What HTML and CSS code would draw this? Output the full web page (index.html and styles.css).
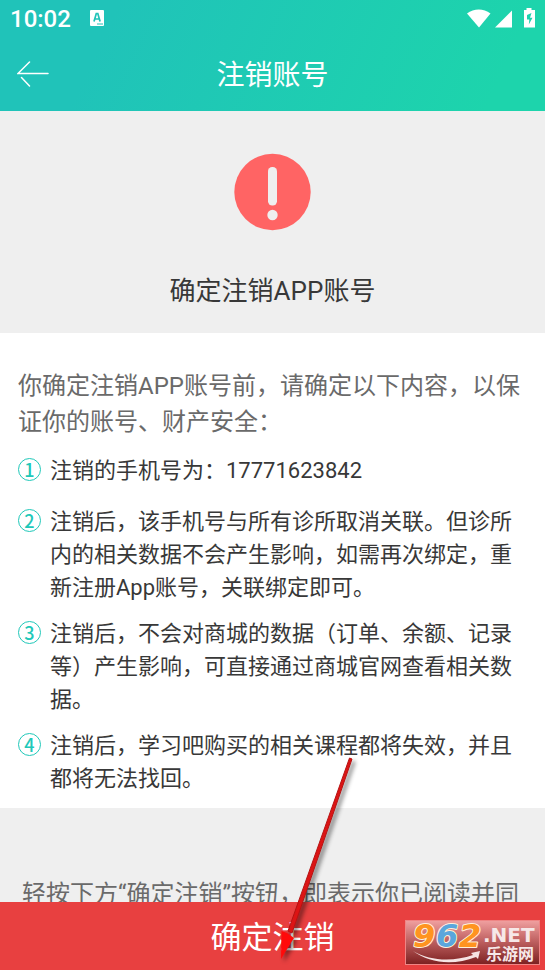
FILE: index.html
```html
<!DOCTYPE html>
<html lang="zh-CN">
<head>
<meta charset="utf-8">
<meta name="viewport" content="width=device-width, initial-scale=1">
<title>注销账号</title>
<link rel="stylesheet" href="styles.css">
</head>
<body>
<div class="app">
  <header class="header">
    <div class="status">
      <span class="clock">10:02</span>
      <svg class="status-app" width="14" height="16" viewBox="0 0 14 16" aria-hidden="true">
        <rect width="14" height="16" rx="1" fill="#fff"/>
        <path d="M4 11.500 6.300 3.500h1.500l2.300 8M4.800 9h4.600" fill="none" stroke="#20c3b8" stroke-width="1.700"/>
        <path d="M7 14h6" stroke="#20c3b8" stroke-width="1"/>
      </svg>
      <svg class="status-icons" width="68" height="20" viewBox="0 0 68 20" aria-hidden="true">
        <path d="M0 5.500C7 .300 16.500.300 23.500 5.500L12 19.500Z" fill="#fff"/>
        <path d="M28 19.500 45 2.500V19.500Z" fill="#fff"/>
        <path d="M57 2h2.500V0h5v2H68V19.500H57Z" fill="#fff"/>
        <path d="M64.500 5 60 7V11.500h2.300L61.800 16.500 65.500 9.700H63Z" fill="#1dd1ae"/>
      </svg>
    </div>
    <div class="navbar">
      <button class="back" type="button" aria-label="返回">
        <svg width="32" height="26" viewBox="0 0 32 26" fill="none" stroke="#fff" stroke-width="1.500" stroke-linecap="round" aria-hidden="true">
          <path d="M12.500 1 1 12.500H31M4.500 16.500 12.500 25"/>
        </svg>
      </button>
      <h1 class="title">注销账号</h1>
    </div>
  </header>

  <main class="main">
    <section class="hero">
      <svg class="alert" width="78" height="78" viewBox="0 0 78 78" aria-hidden="true">
        <circle cx="38.500" cy="39" r="38.200" fill="#ff6464"/>
        <rect x="34" y="14" width="9" height="38.500" rx="4.200" fill="#efefef"/>
        <circle cx="38.500" cy="62" r="5.200" fill="#efefef"/>
      </svg>
      <h2 class="hero-title">确定注销APP账号</h2>
    </section>
    <section class="content">
      <p class="intro">你确定注销APP账号前，请确定以下内容，以保证你的账号、财产安全：</p>
      <ol class="notes">
        <li class="note note-phone"><span class="num">1</span><p>注销的手机号为：17771623842</p></li>
        <li class="note"><span class="num">2</span><p>注销后，该手机号与所有诊所取消关联。但诊所内的相关数据不会产生影响，如需再次绑定，重新注册App账号，关联绑定即可。</p></li>
        <li class="note"><span class="num">3</span><p>注销后，不会对商城的数据（订单、余额、记录等）产生影响，可直接通过商城官网查看相关数据。</p></li>
        <li class="note"><span class="num">4</span><p>注销后，学习吧购买的相关课程都将失效，并且都将无法找回。</p></li>
      </ol>
    </section>
    <p class="agree">轻按下方“确定注销”按钮，即表示你已阅读并同</p>
  </main>

  <button class="confirm" type="button">确定注销</button>

  <svg class="pointer" width="90" height="213" viewBox="0 0 90 213" aria-hidden="true">
    <path d="M74.500 1 77 2 17 176 13 174Z" fill="#dc1414" stroke="#b51212" stroke-width="1"/>
    <path d="M6.500 174 12 176 19 181 6 202Z" fill="#ff0a0a"/>
  </svg>

  <div class="watermark">
    <svg width="135" height="45" viewBox="0 0 135 45" role="img" aria-label="962.NET 乐游网">
      <defs>
        <linearGradient id="wm" x1="0" y1="0" x2="0" y2="1">
          <stop offset="0" stop-color="#f0a0a0"/>
          <stop offset=".45" stop-color="#c16363"/>
          <stop offset="1" stop-color="#7c2020"/>
        </linearGradient>
      </defs>
      <rect x=".5" y=".5" width="134" height="44" fill="url(#wm)" stroke="#ef8585"/>
      <g class="wm-digits">
        <text x="8" y="27" fill="#ff9420">9</text>
        <text x="31" y="27" fill="#5ba6dc">6</text>
        <text x="54" y="27" fill="#ff9420">2</text>
      </g>
      <text class="wm-net" x="78" y="22">.NET</text>
      <text class="wm-name" x="81" y="40">乐游网</text>
      <path d="M8 31C25 41 48 42 68 35L66 33 75 31 73 39 71 37C48 46 24 43 8 31Z" fill="#f6e4e4"/>
    </svg>
  </div>
</div>
</body>
</html>
```
FILE: styles.css
```css
* { box-sizing: border-box; }

body {
  margin: 0;
  font-family: Roboto, "Noto Sans CJK SC", sans-serif;
  color: #383838;
  background: #efefef;
}

h1, h2, p, ol { margin: 0; padding: 0; font-weight: 400; }

button { border: 0; padding: 0; font: inherit; color: inherit; background: none; }

.app {
  position: relative;
  display: flex;
  flex-direction: column;
  height: 100vh;
  overflow: hidden;
}

.header {
  flex: none;
  color: #fff;
  background: linear-gradient(115deg, #20c3b9 20%, #1dd4ac 90%);
}

.status {
  display: flex;
  align-items: center;
  height: 36px;
  padding: 0 10px;
}

.clock { font-size: 24px; font-weight: 500; line-height: 36px; padding-top: 2px; }
.status-app { margin-left: 19px; }
.status-icons { margin-left: auto; }

.navbar {
  display: grid;
  grid-template-columns: 64px 1fr 64px;
  align-items: center;
  height: 75px;
}

.back { display: flex; padding-left: 17px; }
.title { padding-top: 4px; font-size: 28px; line-height: 40px; text-align: center; }

.main { flex: 1; min-height: 0; overflow: hidden; }

.hero {
  display: flex;
  flex-direction: column;
  align-items: center;
  gap: 41px;
  padding: 42px 16px 23px;
}

.hero-title { font-size: 26px; line-height: 38px; }

.content { padding: 35px 17px 13px 18px; background: #fff; }

.intro { font-size: 24px; line-height: 36px; color: #6a6a6a; }

.notes {
  display: flex;
  flex-direction: column;
  gap: 13px;
  margin-top: 14px;
  list-style: none;
}

.note {
  display: flex;
  gap: 9px;
  font-size: 22px;
  line-height: 33px;
}

.note-phone { padding-bottom: 5px; }

.num {
  flex: none;
  width: 23px;
  height: 23px;
  margin-top: 4px;
  border: 1px solid #20c8b9;
  border-radius: 50%;
  font: 500 18px/20px "Noto Sans CJK SC", sans-serif;
  text-align: center;
  color: #20c8b9;
}

.agree {
  padding: 68px 0 0 22px;
  font-size: 24px;
  line-height: 36px;
  color: #6a6a6a;
  white-space: nowrap;
}

.confirm {
  flex: none;
  height: 68px;
  padding-bottom: 4px;
  font-size: 31px;
  color: #fff;
  background: #e84040;
}

.pointer { position: absolute; left: 275px; bottom: 0; filter: drop-shadow(3px 3px 2px rgba(0, 0, 0, .45)); }

.watermark { position: absolute; right: 5px; bottom: 5px; line-height: 0; }

.wm-digits {
  font: italic 700 32px "DejaVu Sans", sans-serif;
  stroke: #fff1dc;
  stroke-width: 2px;
  stroke-linejoin: round;
  paint-order: stroke;
}

.wm-net { font: 700 20px "DejaVu Sans", sans-serif; fill: #f6e8e8; }
.wm-name { font: 700 16px "Noto Sans CJK SC", sans-serif; fill: #f6e8e8; }
```
